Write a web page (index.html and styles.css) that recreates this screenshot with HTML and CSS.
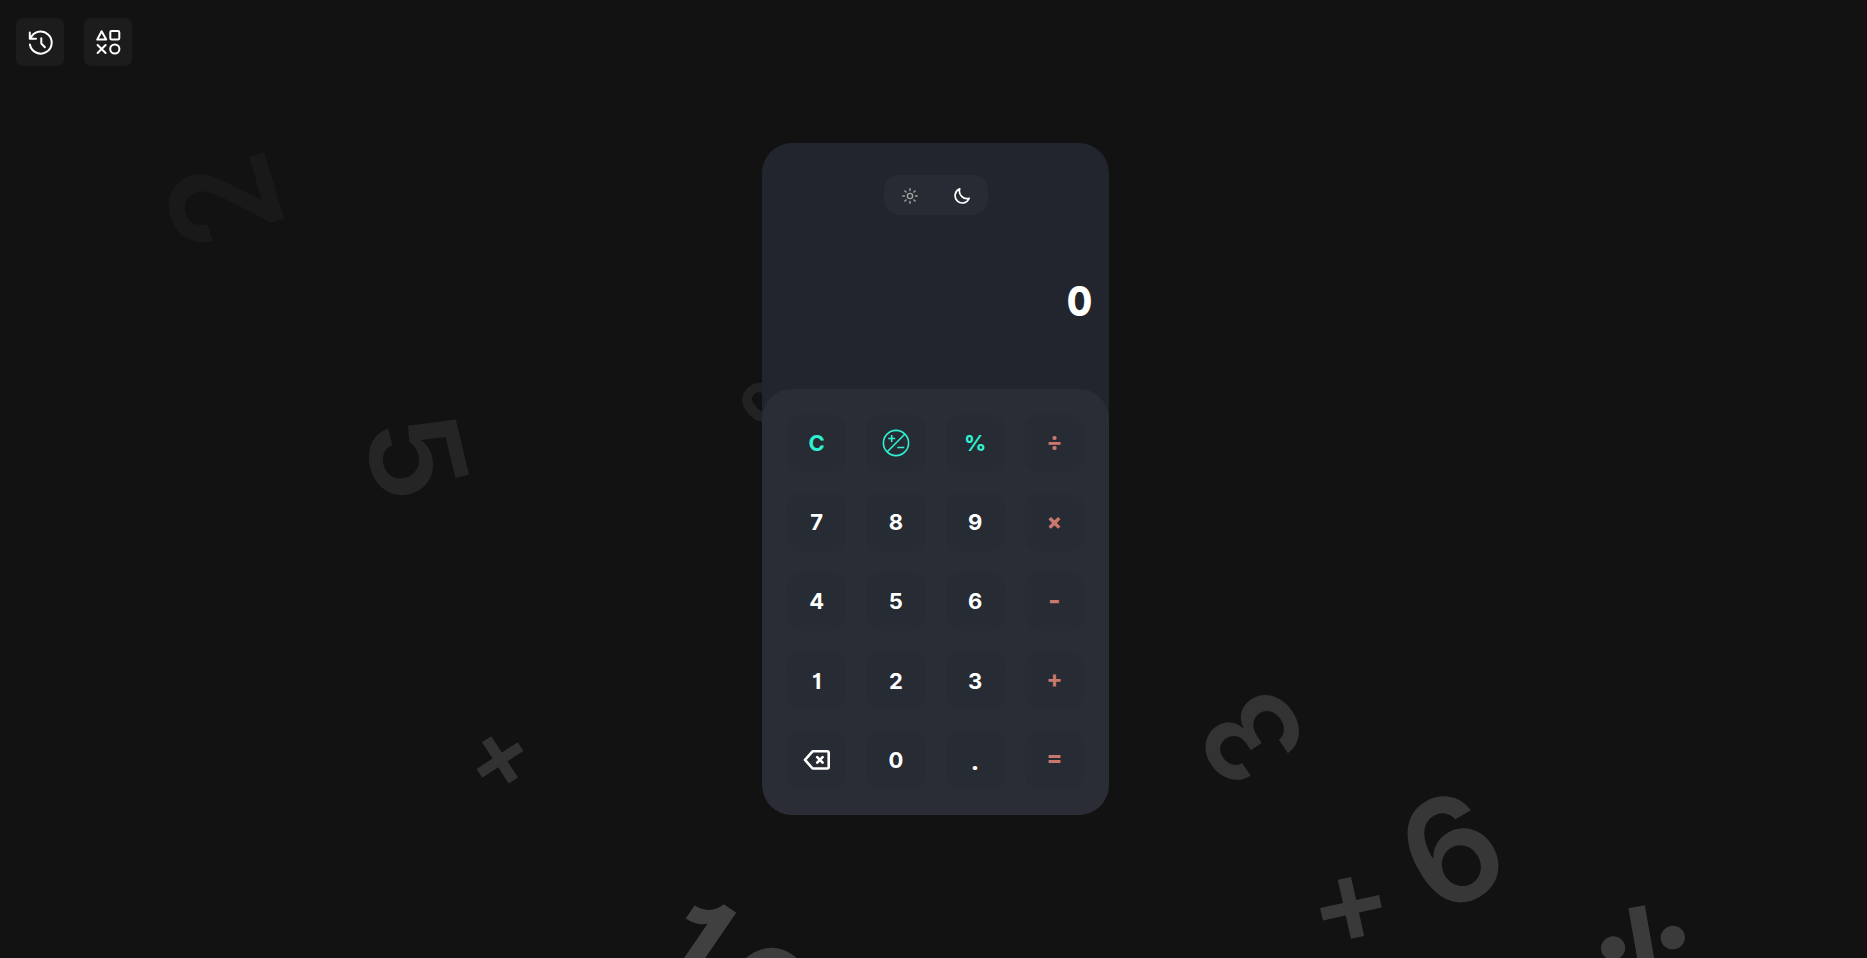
FILE: index.html
```
<!DOCTYPE html>
<html lang="en">
<head>
<meta charset="utf-8">
<title>Calculator</title>
<link rel="stylesheet" href="styles.css">
</head>
<body>
<div class="floaters" aria-hidden="true">
  <span class="floater two">2</span>
  <span class="floater five">5</span>
  <span class="floater percent">%</span>
  <span class="floater plus-small">+</span>
  <span class="floater one">1</span>
  <span class="floater zero">0</span>
  <span class="floater three">3</span>
  <span class="floater six">6</span>
  <span class="floater plus">+</span>
  <span class="floater divide">÷</span>
</div>
<nav class="tools">
  <button class="tool" aria-label="History">
    <svg width="30" height="30" viewBox="0 0 30 30" fill="none" stroke="#fff" stroke-width="2" stroke-linecap="round" stroke-linejoin="round"><path d="M4.8 5.6v6.2H11M5.6 11.3A11 11 0 1 1 4.9 17.5M16.3 11.3v5.2l3.6 3.7"/></svg>
  </button>
  <button class="tool" aria-label="Shapes">
    <svg width="30" height="30" viewBox="0 0 30 30" fill="none" stroke="#fff" stroke-width="2" stroke-linecap="round" stroke-linejoin="round"><path d="M8.6 4.2L4.2 12.6h9zM4.6 18l8 8M12.6 18l-8 8"/><rect x="17.3" y="3.9" width="9" height="8.7" rx="1.4"/><circle cx="21.8" cy="22" r="4.6"/></svg>
  </button>
</nav>
<main class="calculator">
  <div class="display">
    <div class="theme">
      <svg width="16" height="16" viewBox="0 0 16 16" fill="none" stroke="#a3a49f" stroke-width="1.4" stroke-linecap="round"><circle cx="8" cy="8" r="2.6"/><path d="M8 .8v1.7M8 13.5v1.7M.8 8h1.7M13.5 8h1.7M2.9 2.9l1.2 1.2M11.9 11.9l1.2 1.2M2.9 13.1l1.2-1.2M11.9 4.1l1.2-1.2"/></svg>
      <svg width="16" height="16" viewBox="0 0 16 16" fill="none" stroke="#fff" stroke-width="1.7" stroke-linejoin="round"><path d="M5.7.9A7.3 7.3 0 1 0 15.2 10.3 7.6 7.6 0 0 1 5.7.9z"/></svg>
    </div>
    <output class="result">0</output>
  </div>
  <div class="keys">
    <button class="key fn">C</button>
    <button class="key fn" aria-label="Toggle sign"><svg width="28" height="28" viewBox="0 0 28 28" fill="none" stroke="#2ff0d0" stroke-width="1.6"><circle cx="14" cy="14" r="12.6"/><path d="M5 23L23 5M6.2 9.5h7M9.7 6v7M15.3 18.5h7"/></svg></button>
    <button class="key fn">%</button>
    <button class="key op">÷</button>
    <button class="key">7</button>
    <button class="key">8</button>
    <button class="key">9</button>
    <button class="key op times">×</button>
    <button class="key">4</button>
    <button class="key">5</button>
    <button class="key">6</button>
    <button class="key op minus">-</button>
    <button class="key">1</button>
    <button class="key">2</button>
    <button class="key">3</button>
    <button class="key op">+</button>
    <button class="key" aria-label="Backspace"><svg class="backspace" width="28" height="22" viewBox="0 0 28 22" fill="none" stroke="#fff" stroke-width="2.6" stroke-linecap="round" stroke-linejoin="round"><path d="M9.6 2.3H24.2Q25.7 2.3 25.7 3.8V18Q25.7 19.5 24.2 19.5H9.6L2 10.9zM14.2 8.2l5.4 5.4M19.6 8.2l-5.4 5.4"/></svg></button>
    <button class="key">0</button>
    <button class="key point">.</button>
    <button class="key op">=</button>
  </div>
</main>
</body>
</html>
```
FILE: styles.css
```
* { box-sizing: border-box; }
body {
  margin: 0;
  height: 100vh;
  overflow: hidden;
  background: #121212;
  font-family: Inter, sans-serif;
  font-feature-settings: "cv01";
  color: #fff;
}
button { border: 0; padding: 0; color: inherit; font: inherit; font-feature-settings: inherit; }
svg { display: block; }

.floaters { position: absolute; inset: 0; overflow: hidden; font-weight: 600; line-height: 1; }
.floater { position: absolute; translate: -50% -50%; }
.two { left: 222.5px; top: 201px; font-size: 147px; color: #191919; transform: rotate(-106.6deg) scaleX(.95); }
.five { left: 416px; top: 456px; font-size: 128px; color: #252525; transform: rotate(76.5deg) scaleX(1.05); }
.percent { left: 797px; top: 400.5px; font-size: 112px; color: #222; transform: rotate(-40deg); }
.plus-small { left: 495.5px; top: 753.5px; font-size: 100px; color: #323232; transform: rotate(-33deg); }
.one { left: 690px; top: 948px; font-size: 150px; color: #3f403f; transform: rotate(34.5deg) scaleX(.9); }
.zero { left: 760px; top: 1001px; font-size: 150px; color: #3d3d3d; transform: rotate(34.5deg) scaleX(.95); }
.three { left: 1252px; top: 738px; font-size: 130px; color: #333; transform: rotate(-123.7deg) scaleX(.94); }
.six { left: 1451px; top: 849.5px; font-size: 147px; color: #373737; transform: rotate(-30deg) scaleX(.96); }
.plus { left: 1349px; top: 898.5px; font-size: 123px; color: #393939; transform: rotate(-12.5deg); }
.divide { left: 1654px; top: 940.6px; font-size: 157px; color: #3b3b3b; transform: rotate(80deg) scaleX(.97); }

.tools { position: absolute; top: 18px; left: 16px; display: flex; gap: 20px; }
.tool { display: grid; place-items: center; width: 48px; height: 48px; border-radius: 7px; background: #1c1c1c; }

.calculator {
  position: relative;
  width: 347px;
  height: 672px;
  margin: 143px auto 0 762px;
  display: flex;
  flex-direction: column;
  overflow: hidden;
  border-radius: 30px;
  background: #22252d;
}
.display { height: 246px; padding: 32px 16px 0; display: flex; flex-direction: column; align-items: center; }
.theme { display: flex; align-items: center; justify-content: space-between; width: 104px; height: 40px; padding: 1px 18px 0; border-radius: 15px; background: #272b33; }
.result { align-self: flex-end; margin: 62px 1px 0 0; font-size: 41px; line-height: 48px; font-weight: 800; transform: scaleX(.9); transform-origin: right; }
.keys {
  flex: 1;
  padding: 24.5px 25px 25.5px;
  display: grid;
  grid-template-columns: repeat(4, 1fr);
  grid-template-rows: repeat(5, 1fr);
  gap: 20px;
  border-radius: 30px;
  background: #2a2d36;
}
.key { display: grid; place-items: center; border-radius: 16px; background: #272b33; font-size: 22px; line-height: 26px; font-weight: 700; }
.fn { color: #2ff0d0; }
.op { padding-bottom: 3px; color: #ca786d; font-size: 24px; }
.times { font-size: 22px; font-weight: 800; }
.minus { padding-bottom: 0; font-size: 27px; }
.point { padding-top: 2px; font-family: Roboto, sans-serif; font-size: 28px; }
```
